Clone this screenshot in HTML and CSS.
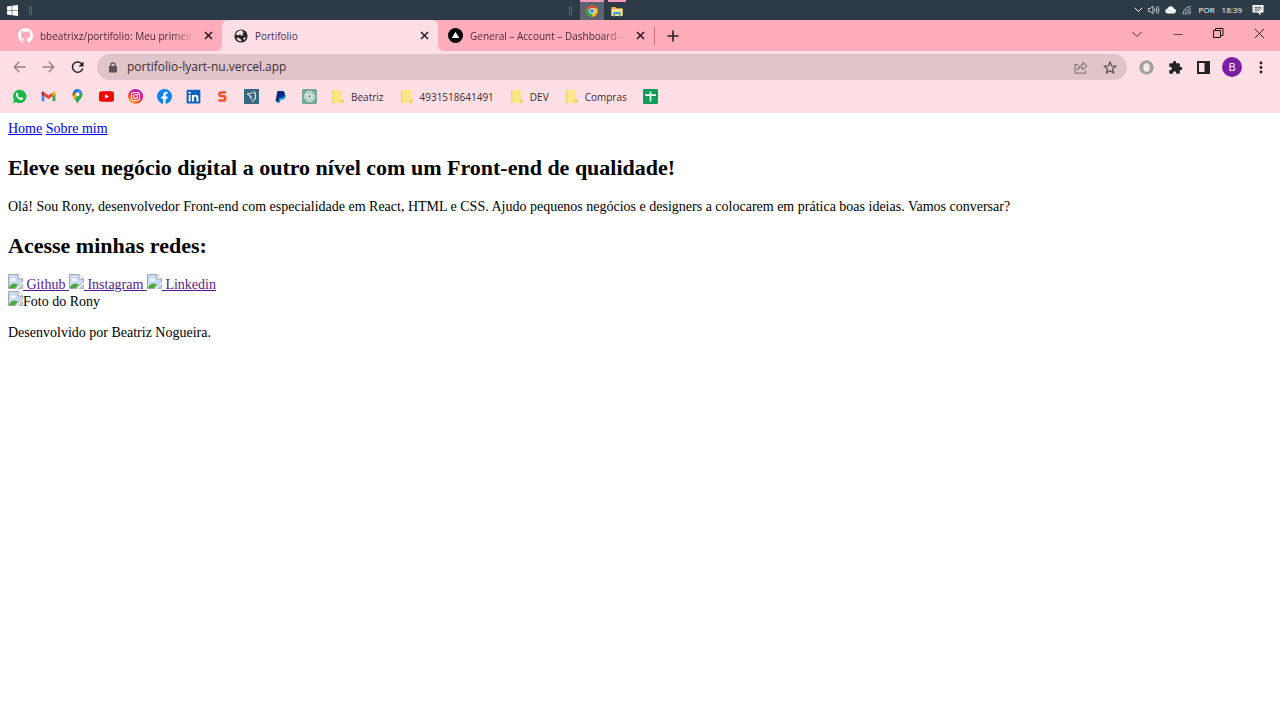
FILE: index.html
```html
<!DOCTYPE html>
<html lang="pt-BR">
<head>
<meta charset="utf-8">
<title>Portifolio</title>
<link rel="stylesheet" href="styles.css">
</head>
<body>
<svg class="defs" aria-hidden="true">
  <symbol id="x" viewBox="0 0 10 10"><path d="M1.800 1.800l6.400 6.400M8.200 1.800l-6.400 6.400" stroke="#2a1a1e" stroke-width="1.400"/></symbol>
  <symbol id="folder" viewBox="0 0 14 15"><path d="M1 1h10v9h1.500v4H1z" fill="#fbe48a"/><path d="M1 1h1.500v13H1z" fill="#f3d672"/><path d="M11 9.500l1.500 1.500v3H10v-3z" fill="#ecd05e"/></symbol>
  <symbol id="broken" viewBox="0 0 15 15"><path d="M.5 14.500V.5H10L14.500 5v3L8 14.500z" fill="#c9dcf5" stroke="#a5a5a5"/><path d="M10 .5V5h4.500" fill="#fff" stroke="#a5a5a5"/><path d="M3 6c0-2 3-2.500 3.500-1C8 5 8 7 7 7H3z" fill="#fff"/><path d="M1 14c1-4 5-5.500 9-3.500L7 14z" fill="#4caa3b"/><path d="M15 8v7H8z" fill="#fff"/><path d="M14.500 10.500v4h-4z" fill="#b9d3ee" stroke="#a5a5a5" stroke-width=".7"/></symbol>
</svg>

<header class="taskbar">
  <div class="task-side">
    <button class="icon-btn" aria-label="Iniciar"><svg width="11" height="11" viewBox="0 0 11 11"><path d="M0 1.500L4.700.8V5.200H0zM5.300.7L11 0v5.200H5.300zM0 5.800h4.700v4.500L0 9.600zM5.300 5.800H11V11l-5.700-.7z" fill="#fff"/></svg></button>
    <span class="grip"></span>
  </div>
  <div class="task-apps">
    <span class="grip"></span>
    <button class="app app-active" aria-label="Chrome"><svg width="12" height="12" viewBox="0 0 24 24"><circle cx="12" cy="12" r="11" fill="#fbc116"/><path d="M12 12L2.500 6.500A11 11 0 0 1 21.500 6.500z" fill="#e94335"/><path d="M2.500 6.500A11 11 0 0 0 11 23l5-9-4-2z" fill="#34a353"/><path d="M12 6.500h9.600A11 11 0 0 1 11.500 23L17 14z" fill="#fbc116"/><circle cx="12" cy="12" r="5.500" fill="#fff"/><circle cx="12" cy="12" r="4.200" fill="#4285f4"/></svg></button>
    <button class="app" aria-label="Explorador de Arquivos"><svg width="12" height="11" viewBox="0 0 12 11"><path d="M.5 1h4l1 1.300h6V10H.5z" fill="#e9b43c"/><path d="M.5 3h11v7H.5z" fill="#ffe08a"/><path d="M2.500 6h7v4.500H8V8H4v2.500H2.500z" fill="#3a9be0"/></svg></button>
  </div>
  <div class="tray">
    <svg width="9" height="6" viewBox="0 0 9 6"><path d="M.8.8l3.700 3.700L8.200.8" fill="none" stroke="#fff"/></svg>
    <svg width="12" height="10" viewBox="0 0 12 10"><path d="M.5 3.500H2.300L5 1v8L2.300 6.500H.5zM6.500 3.500q1 1.500 0 3M8 2.200q2 2.800 0 5.600M9.600 1q3 4 0 8" fill="none" stroke="#e5e9eb" stroke-width=".8"/></svg>
    <svg width="12" height="8" viewBox="0 0 12 8"><path d="M3 7.500a2.500 2.500 0 0 1-.3-5A3.300 3.300 0 0 1 9 2.800a2.400 2.400 0 0 1 .3 4.700z" fill="#fff"/><path d="M1 4.500q3-1 5 .5t5 .5" fill="none" stroke="#bcc5ca" stroke-width=".8"/></svg>
    <svg width="10" height="10" viewBox="0 0 10 10"><path d="M1 9.500A8 8 0 0 1 9 1.500M3 9.500A6 6 0 0 1 9 4M5 9.500A4 4 0 0 1 9 6.200M7 9.500A2 2 0 0 1 9 8" fill="none" stroke="#c9d0d4" stroke-width=".9"/></svg>
    <span class="tray-text">POR</span>
    <time class="tray-text">18:39</time>
    <svg class="notice" width="12" height="12" viewBox="0 0 12 12"><path d="M.5 1h11v7.500H8.500v2.800L5.700 8.500H.5z" fill="#fff"/><path d="M2.300 3.300h7.400M2.300 5h7.400M2.300 6.700h5" stroke="#2d3b47" stroke-width=".8"/></svg>
  </div>
</header>

<div class="tabstrip">
  <div class="tabs">
    <div class="tab">
      <svg width="15" height="15" viewBox="0 0 16 16"><path fill="#fff" d="M8 0a8 8 0 0 0-2.530 15.590c.4.070.55-.17.550-.38v-1.490c-2.230.48-2.700-.95-2.700-.95-.36-.92-.89-1.170-.89-1.170-.73-.5.060-.49.060-.49.800.06 1.230.83 1.230.83.710 1.230 1.870.87 2.330.67.070-.52.280-.87.510-1.070-1.780-.2-3.640-.89-3.640-3.950 0-.87.310-1.590.82-2.150-.08-.2-.36-1.020.080-2.120 0 0 .67-.22 2.200.82a7.600 7.600 0 0 1 4 0c1.530-1.040 2.200-.82 2.200-.82.440 1.100.160 1.920.080 2.120.51.560.82 1.280.82 2.150 0 3.070-1.870 3.750-3.650 3.950.29.250.54.730.54 1.480v2.190c0 .21.150.46.550.38A8 8 0 0 0 8 0z"/></svg>
      <span class="tab-title fade">bbeatrixz/portifolio: Meu primeir</span>
      <button class="icon-btn" aria-label="Fechar guia"><svg width="11" height="11"><use href="#x"/></svg></button>
    </div>
    <div class="tab tab-active">
      <svg width="14" height="14" viewBox="0 0 14 14"><circle cx="7" cy="7" r="6.600" fill="#29272a"/><path d="M7.500 1.300C5 1.300 2.600 3 1.700 5.500L4 6.300l2-.8 1.500 1L9.500 6 8.300 4.300l1.500-.8-1-1zM2.500 9.500l2 2.300 2.700.7.300-1.600-2-1.500L4 8.500zM9 9.800l1.300 1.100 1.600-2-1.400-.7z" fill="#ffdfe6"/></svg>
      <span class="tab-title">Portifolio</span>
      <button class="icon-btn" aria-label="Fechar guia"><svg width="11" height="11"><use href="#x"/></svg></button>
    </div>
    <div class="tab">
      <svg width="15" height="15" viewBox="0 0 15 15"><circle cx="7.500" cy="7.500" r="7.500"/><path d="M7.500 3.700l3.700 6.300H3.800z" fill="#fff"/></svg>
      <span class="tab-title fade">General – Account – Dashboard –</span>
      <button class="icon-btn" aria-label="Fechar guia"><svg width="11" height="11"><use href="#x"/></svg></button>
    </div>
    <button class="icon-btn new-tab" aria-label="Nova guia"><svg width="12" height="12" viewBox="0 0 12 12"><path d="M6 .5v11M.5 6h11" stroke="#2a1a1e" stroke-width="1.600"/></svg></button>
  </div>
  <div class="window-controls">
    <button aria-label="Pesquisar guias"><svg width="12" height="12" viewBox="0 0 12 12"><path d="M1.500 4L6 8.500 10.500 4" fill="none" stroke="#5a2b35"/></svg></button>
    <button aria-label="Minimizar"><svg width="10" height="12" viewBox="0 0 10 12"><path d="M.5 6.500h9" stroke="#6b3f49"/></svg></button>
    <button aria-label="Restaurar"><svg width="11" height="11" viewBox="0 0 11 11"><path d="M.5 2.500h7v7h-7z M2.500 2.500V.5h7.500v7H7.500" fill="none" stroke="#1c0d10"/></svg></button>
    <button aria-label="Fechar"><svg width="11" height="11" viewBox="0 0 11 11"><path d="M1 1l9 9M10 1l-9 9" stroke="#3a1a20"/></svg></button>
  </div>
</div>

<div class="toolbar">
  <div class="nav-buttons">
    <button class="icon-btn" aria-label="Voltar"><svg width="13" height="12" viewBox="0 0 13 12"><path d="M12.500 6H1.200M6.300.8L1.200 6l5.100 5.200" fill="none" stroke="#8f8286" stroke-width="1.300"/></svg></button>
    <button class="icon-btn" aria-label="Avançar"><svg width="13" height="12" viewBox="0 0 13 12"><path d="M.5 6h11.300M6.700.8L11.800 6l-5.100 5.200" fill="none" stroke="#8f8286" stroke-width="1.300"/></svg></button>
    <button class="icon-btn" aria-label="Recarregar"><svg width="13" height="13" viewBox="0 0 13 13"><path d="M11 3.200A5.200 5.200 0 1 0 11.700 7.500" fill="none" stroke="#252023" stroke-width="1.500"/><path d="M12.500.5v5h-5z" fill="#252023"/></svg></button>
  </div>
  <div class="address">
    <svg width="8" height="11" viewBox="0 0 8 11"><path d="M0 4h8v6.500H0z" fill="#5b5053"/><path d="M1.800 4.500V3a2.200 2.200 0 0 1 4.400 0v1.500" fill="none" stroke="#5b5053" stroke-width="1.200"/></svg>
    <input class="url" type="text" aria-label="Endereço" value="portifolio-lyart-nu.vercel.app">
    <button class="icon-btn" aria-label="Compartilhar"><svg width="14" height="13" viewBox="0 0 14 13"><path d="M4 3.500H1v8.700h10.500V9.500M3.500 8.800C4 5.500 6 4 8.800 4V1.200L13 5 8.800 8.800V6.300C6.500 6.300 5 7 3.500 8.800z" fill="none" stroke="#74676b"/></svg></button>
    <button class="icon-btn" aria-label="Favoritar"><svg width="14" height="13" viewBox="0 0 14 13"><path d="M7 1l1.600 3.900 4.200.3-3.200 2.700 1 4.100L7 9.800 3.400 12l1-4.100L1.200 5.200l4.200-.3z" fill="none" stroke="#5b5053" stroke-width="1.200"/></svg></button>
  </div>
  <div class="extensions">
    <button class="icon-btn" aria-label="Extensão"><svg width="15" height="15" viewBox="0 0 15 15"><circle cx="7.500" cy="7.500" r="7.200" fill="#a3a0a0"/><ellipse cx="7.500" cy="7.500" rx="3.200" ry="4.200" fill="#f6e8eb"/></svg></button>
    <button class="icon-btn" aria-label="Extensões"><svg width="15" height="15" viewBox="0 0 24 24"><path fill="#222" d="M20.500 11H19V7a2 2 0 0 0-2-2h-4V3.500a2.500 2.500 0 0 0-5 0V5H4a2 2 0 0 0-2 2v3.800h1.500a2.700 2.700 0 0 1 0 5.400H2V20a2 2 0 0 0 2 2h3.800v-1.500a2.700 2.700 0 0 1 5.400 0V22H17a2 2 0 0 0 2-2v-4h1.500a2.500 2.500 0 0 0 0-5z"/></svg></button>
    <button class="icon-btn" aria-label="Painel lateral"><svg width="13" height="13" viewBox="0 0 13 13"><path d="M0 0h13v13H0z" fill="#252023"/><path d="M2 2h5.500v9H2z" fill="#ffdfe6"/></svg></button>
    <button class="avatar" aria-label="Perfil">B</button>
    <button class="icon-btn menu" aria-label="Menu"><svg width="4" height="13" viewBox="0 0 4 13"><g fill="#2a1a1e"><circle cx="2" cy="2" r="1.400"/><circle cx="2" cy="6.500" r="1.400"/><circle cx="2" cy="11" r="1.400"/></g></svg></button>
  </div>
</div>

<nav class="bookmarks" aria-label="Favoritos">
  <a href="#" aria-label="WhatsApp"><svg width="15" height="15" viewBox="0 0 24 24"><path d="M1.500 22.500l1.700-5.300A10.700 10.700 0 1 1 7 21z" fill="#19b94a"/><path d="M7 6.500c.8-1 1.700-.8 2 0l.9 2c.3.700-.9 1.400-.9 2 .8 1.800 2.300 3.300 4.300 4 .7 0 1.300-1.700 2-1.400l2.300 1.100c1 .8-.6 3.300-2.700 3.300C10 17.500 4.600 11 7 6.500z" fill="#fff"/></svg></a>
  <a href="#" aria-label="Gmail"><svg width="15" height="15" viewBox="0 0 24 24"><path d="M1 6v13.500h4.500V10z" fill="#4285f4"/><path d="M23 6v13.500h-4.500V10z" fill="#34a853"/><path d="M5.500 5.500v6L12 16l6.500-4.500v-6L12 10.300z" fill="#ea4335"/><path d="M1 6c0-2 2-2.700 3.500-1.300l1 .8v6L1 8.500z" fill="#c5221f"/><path d="M23 6c0-2-2-2.700-3.500-1.300l-1 .8v6L23 8.500z" fill="#fbbc04"/></svg></a>
  <a href="#" aria-label="Maps"><svg width="15" height="15" viewBox="0 0 24 24"><path d="M12 24C10.500 18 4 15 4 8.500a8 8 0 0 1 16 0C20 15 13.500 18 12 24z" fill="#34a853"/><path d="M5.500 4L9.500 7 5 12A8 8 0 0 1 5.500 4z" fill="#ea4335"/><path d="M5.500 4A8 8 0 0 1 14.500.9L9 7.500z" fill="#1a73e8"/><path d="M14.500.9A8 8 0 0 1 19 4.700L14 10.500 12 5z" fill="#4285f4"/><path d="M9 7.500L5 12.500l2 3.300 7-7z" fill="#fbbc04"/><circle cx="12" cy="8.300" r="3" fill="#fff"/></svg></a>
  <a href="#" aria-label="YouTube"><svg width="15" height="15" viewBox="0 0 24 24"><rect y="3.500" width="24" height="17" rx="4" fill="#f00"/><path d="M9.500 8.300v7.400L16 12z" fill="#fff"/></svg></a>
  <a href="#" aria-label="Instagram"><svg width="15" height="15" viewBox="0 0 24 24"><defs><linearGradient id="ig" x1=".2" y1="1" x2=".8" y2="0"><stop offset="0" stop-color="#ffc83d"/><stop offset=".35" stop-color="#fb4a31"/><stop offset=".65" stop-color="#e0127c"/><stop offset="1" stop-color="#8a2be2"/></linearGradient></defs><circle cx="12" cy="12" r="12" fill="url(#ig)"/><rect x="5.500" y="5.500" width="13" height="13" rx="4" fill="none" stroke="#fff" stroke-width="1.700"/><circle cx="12" cy="12" r="3.200" fill="none" stroke="#fff" stroke-width="1.700"/><circle cx="15.800" cy="8.300" r="1" fill="#fff"/></svg></a>
  <a href="#" aria-label="Facebook"><svg width="15" height="15" viewBox="0 0 24 24"><circle cx="12" cy="12" r="12" fill="#0c82ee"/><path d="M10 24v-8.500H7V12h3V9.300C10 6.200 11.800 4.500 14.500 4.500l2.500.2v3h-1.500c-1.400 0-1.800.9-1.800 1.800V12H17l-.6 3.500h-2.700V24z" fill="#fff"/></svg></a>
  <a href="#" aria-label="LinkedIn"><svg width="15" height="15" viewBox="0 0 24 24"><rect x="1" y="1" width="22" height="22" rx="2" fill="#0a62be"/><path d="M4.300 9.500h3V20h-3zM9.500 9.500h3V11c1.800-2.700 7.300-2.300 7.300 2.700V20h-3.100v-5.500c0-3.500-4-3.300-4 0V20H9.500z" fill="#fff"/><circle cx="5.800" cy="6" r="1.800" fill="#fff"/></svg></a>
  <a href="#" aria-label="S"><svg width="15" height="15" viewBox="0 0 24 24"><path d="M17.500 5.500H10c-4 0-4 6 0 6h3.500c4 0 4 7 0 7H5.500" fill="none" stroke="#f0532d" stroke-width="4"/></svg></a>
  <a href="#" aria-label="Atalho"><svg width="15" height="15" viewBox="0 0 24 24"><path d="M0 0h24v24H0z" fill="#3b6681"/><path d="M5 8l9-2M5 8l8 5M9 12l4 6M15 3c5 5 5 13-2 18M17 5c2 5 2 9-1 13" fill="none" stroke="#e4edf2" stroke-width="1.600"/></svg></a>
  <a href="#" aria-label="PayPal"><svg width="15" height="15" viewBox="0 0 24 24"><path d="M9 8h9c5 2 2 9-4 9h-2l-1 5H6z" fill="#159bd8"/><path d="M7 3h8c6 0 5 11-2 11h-3l-1 6H4z" fill="#032c7c"/></svg></a>
  <a href="#" aria-label="ChatGPT"><svg width="15" height="15" viewBox="0 0 24 24"><rect width="24" height="24" rx="2" fill="#75a896"/><g fill="none" stroke="#edf6f2" stroke-width="1.200"><path id="petal" d="M12 8.500l3.500 2v5L11 18a3.800 3.800 0 0 1-5.500-1.500"/><path d="M12 8.500l3.500 2v5L11 18a3.800 3.800 0 0 1-5.500-1.500" transform="rotate(60 12 12)"/><path d="M12 8.500l3.500 2v5L11 18a3.800 3.800 0 0 1-5.500-1.500" transform="rotate(120 12 12)"/><path d="M12 8.500l3.500 2v5L11 18a3.800 3.800 0 0 1-5.500-1.500" transform="rotate(180 12 12)"/><path d="M12 8.500l3.500 2v5L11 18a3.800 3.800 0 0 1-5.500-1.500" transform="rotate(240 12 12)"/><path d="M12 8.500l3.500 2v5L11 18a3.800 3.800 0 0 1-5.500-1.500" transform="rotate(300 12 12)"/><circle cx="12" cy="12" r="8"/></g></svg></a>
  <a class="named" href="#"><svg width="14" height="15"><use href="#folder"/></svg>Beatriz</a>
  <a class="named" href="#"><svg width="14" height="15"><use href="#folder"/></svg>4931518641491</a>
  <a class="named" href="#"><svg width="14" height="15"><use href="#folder"/></svg>DEV</a>
  <a class="named" href="#"><svg width="14" height="15"><use href="#folder"/></svg>Compras</a>
  <a href="#" aria-label="Planilhas"><svg width="15" height="15" viewBox="0 0 15 15"><rect width="15" height="15" rx="1" fill="#129c57"/><path d="M7.500 2.500v10M2 6.200h11" stroke="#fff" stroke-width="1.700"/></svg></a>
</nav>

<main class="page">
  <nav><a href="#">Home</a> <a href="#">Sobre mim</a></nav>
  <h2>Eleve seu negócio digital a outro nível com um Front-end de qualidade!</h2>
  <p>Olá! Sou Rony, desenvolvedor Front-end com especialidade em React, HTML e CSS. Ajudo pequenos negócios e designers a colocarem em prática boas ideias. Vamos conversar?</p>
  <h2>Acesse minhas redes:</h2>
  <div class="social"><a href="#"><svg width="15" height="15"><use href="#broken"/></svg> Github </a><a href="#"><svg width="15" height="15"><use href="#broken"/></svg> Instagram </a><a href="#"><svg width="15" height="15"><use href="#broken"/></svg> Linkedin</a></div>
  <div class="photo"><svg width="15" height="15"><use href="#broken"/></svg>Foto do Rony</div>
  <footer>Desenvolvido por Beatriz Nogueira.</footer>
</main>
</body>
</html>
```
FILE: styles.css
```css
* { box-sizing: border-box; }
body { margin: 0; background: #fff; font-family: "Open Sans", "Noto Sans", sans-serif; }
button { border: 0; padding: 0; margin: 0; background: none; font: inherit; color: inherit; }
svg { flex: none; }
.defs { position: absolute; width: 0; height: 0; }
.icon-btn { display: flex; align-items: center; justify-content: center; }

/* Taskbar */
.taskbar { display: grid; grid-template-columns: 1fr auto 1fr; height: 20px; background: #2d3b47; color: #fff; }
.task-side { display: flex; align-items: center; gap: 11px; padding-left: 7px; }
.grip { width: 3px; height: 9px; border: solid #5c6871; border-width: 0 1px; }
.task-apps { display: flex; align-items: center; padding-right: 86px; }
.task-apps .grip { margin-right: 8px; }
.app { display: flex; align-items: center; justify-content: center; width: 18px; height: 20px; margin-left: 4px; border-top: 2px solid #f79bb8; }
.app-active { width: 24px; margin-left: 0; background: #5c656e; }
.tray { display: flex; align-items: center; justify-content: flex-end; gap: 5px; padding-right: 16px; }
.tray-text { font-size: 8px; line-height: 12px; margin-left: 2px; }
.notice { margin-left: 5px; }

/* Tabs */
.tabstrip { display: flex; justify-content: space-between; height: 31px; background: #ffacbb; color: #4c2b33; }
.tabs { display: flex; padding-left: 6px; }
.tab { display: flex; align-items: center; width: 216px; padding: 0 8px 0 12px; font-size: 10px; line-height: 16px; }
.tab-title { flex: 1; min-width: 0; margin: 0 8px 0 7px; white-space: nowrap; }
.fade { -webkit-mask-image: linear-gradient(to right, #000 85%, transparent); mask-image: linear-gradient(to right, #000 85%, transparent); }
.tab:nth-child(3) { padding-left: 10px; }
.tab-active { position: relative; background: #ffdfe6; border-radius: 6px 6px 0 0; }
.tab-active::before, .tab-active::after { content: ""; position: absolute; bottom: 0; width: 6px; height: 6px; }
.tab-active::before { right: 100%; background: radial-gradient(circle at 0 0, transparent 6px, #ffdfe6 6px); }
.tab-active::after { left: 100%; background: radial-gradient(circle at 100% 0, transparent 6px, #ffdfe6 6px); }
.new-tab { align-self: center; height: 18px; padding-left: 12px; border-left: 1px solid #b87582; }
.window-controls { display: flex; padding-bottom: 4px; }
.window-controls button { display: flex; align-items: center; justify-content: center; width: 41px; }

/* Toolbar */
.toolbar { display: flex; align-items: center; height: 32px; padding-right: 17px; background: #ffdfe6; }
.nav-buttons { display: flex; gap: 16px; padding: 0 13px; }
.address { flex: 1; display: flex; align-items: center; height: 26px; padding: 0 10px 0 12px; border-radius: 13px; background: #dfc4ca; }
.url { flex: 1; min-width: 0; border: 0; padding: 0; margin: 0 10px; background: none; outline: 0; font: 12px/18px "Open Sans", "Noto Sans", sans-serif; color: #3c3034; }
.address .icon-btn + .icon-btn { margin-left: 15px; }
.extensions { display: flex; align-items: center; gap: 14px; padding-left: 12px; }
.avatar { width: 20px; height: 20px; margin: 0 -2px; border-radius: 50%; background: #7b1fa2; color: #fff; font-size: 11px; line-height: 20px; text-align: center; }
.menu { margin-left: 5px; }

/* Bookmarks */
.bookmarks { display: flex; align-items: center; gap: 14px; height: 30px; padding: 0 12px 3px; background: #ffdfe6; font-size: 10px; line-height: 16px; }
.bookmarks a { display: flex; align-items: center; gap: 6px; color: #3c2a2f; text-decoration: none; }
.bookmarks .named { padding-right: 2px; }

/* Page content */
.page { padding: 7px 8px; font-family: "Liberation Serif", "Times New Roman", serif; font-size: 14px; line-height: 17px; color: #000; }
.page nav a { color: #0000ee; }
.page h2 { margin: 18px 0; font-size: 22px; line-height: 25px; }
.page p { margin: 0; }
.social a { color: #551a8b; }
.social svg, .photo svg { margin-top: -3px; vertical-align: baseline; }
.page footer { margin-top: 14px; }
```
